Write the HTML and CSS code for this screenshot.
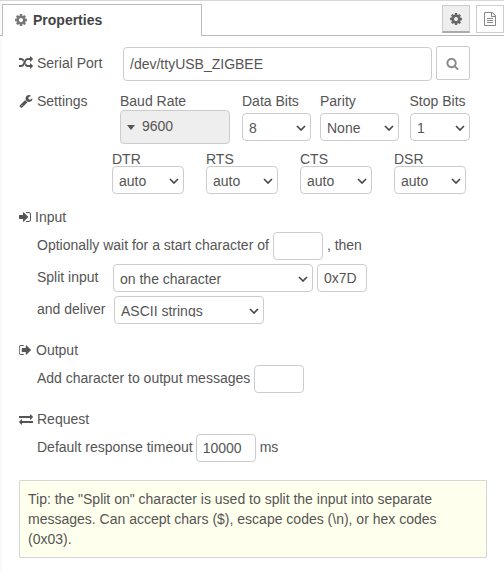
FILE: index.html
```html
<!DOCTYPE html>
<html lang="en">
<head>
<meta charset="utf-8">
<title>Properties</title>
<link rel="stylesheet" href="styles.css">
</head>
<body>
<svg class="sprite" aria-hidden="true">
<symbol id="cog" viewBox="0 0 1792 1792"><path d="M1152 896q0-106-75-181t-181-75-181 75-75 181 75 181 181 75 181-75 75-181zm512-109v222q0 12-8 23t-20 13l-185 28q-19 54-39 91 35 50 107 138 10 12 10 25t-9 23q-27 37-99 108t-94 71q-12 0-26-9l-138-108q-44 23-91 38-16 136-29 186-7 28-36 28h-222q-14 0-24.500-8.500t-11.500-21.500l-28-184q-49-16-90-37l-141 107q-10 9-25 9-14 0-25-11-126-114-165-168-7-10-7-23 0-12 8-23 15-21 51-66.500t54-70.500q-27-50-41-99l-183-27q-13-2-21-12.500t-8-23.500v-222q0-12 8-23t19-13l186-28q14-46 39-92-40-57-107-138-10-12-10-24 0-10 9-23 26-36 98.500-107.500t94.500-71.500q13 0 26 10l138 107q44-23 91-38 16-136 29-186 7-28 36-28h222q14 0 24.500 8.500t11.500 21.500l28 184q49 16 90 37l142-107q9-9 24-9 13 0 25 10 129 119 165 170 7 8 7 22 0 12-8 23-15 21-51 66.500t-54 70.500q26 50 41 98l183 28q13 2 21 12.500t8 23.500z"/></symbol>
<symbol id="random" viewBox="0 0 1792 1792"><path d="M666 481q-60 92-137 273-22-45-37-72.500t-40.500-63.500-51-56.500-63-35-81.500-14.500h-224q-14 0-23-9t-9-23v-192q0-14 9-23t23-9h224q250 0 410 225zm1126 799q0 14-9 23l-320 320q-9 9-23 9-13 0-22.500-9.500t-9.500-22.500v-192q-32 0-85 .5t-81 1-73-1-71-5-64-10.500-63-18.500-58-28.500-59-40-55-53.500-56-69.500q59-93 136-273 22 45 37 72.500t40.500 63.500 51 56.500 63 35 81.500 14.500h256v-192q0-14 9-23t23-9q12 0 24 10l319 319q9 9 9 23zm0-896q0 14-9 23l-320 320q-9 9-23 9-13 0-22.500-9.500t-9.500-22.500v-192h-256q-48 0-87 15t-69 45-51 61.500-45 77.500q-32 62-78 171-29 66-49.500 111t-54 105-64 100-74 83-90 68.500-106.500 42-128 16.500h-224q-14 0-23-9t-9-23v-192q0-14 9-23t23-9h224q48 0 87-15t69-45 51-61.500 45-77.500q32-62 78-171 29-66 49.500-111t54-105 64-100 74-83 90-68.500 106.500-42 128-16.500h256v-192q0-14 9-23t23-9q12 0 24 10l319 319q9 9 9 23z"/></symbol>
<symbol id="wrench" viewBox="0 0 1792 1792"><path d="M448 1472q0-26-19-45t-45-19-45 19-19 45 19 45 45 19 45-19 19-45zm644-420l-682 682q-37 37-90 37-52 0-91-37l-106-108q-38-36-38-90 0-53 38-91l681-681q39 98 114.500 173.500t173.500 114.500zm634-435q0 39-23 106-47 134-164.500 217.500t-258.500 83.500q-185 0-316.500-131.500t-131.500-316.500 131.500-316.500 316.500-131.500q58 0 121.500 16.500t107.500 46.500q16 11 16 28t-16 28l-293 169v224l193 107q5-3 79-48.500t135.500-81 70.500-35.500q15 0 23.500 10t8.500 25z"/></symbol>
<symbol id="sign-in" viewBox="128 0 1792 1792"><path d="M1312 896q0 26-19 45l-544 544q-19 19-45 19t-45-19-19-45v-288h-448q-26 0-45-19t-19-45v-384q0-26 19-45t45-19h448v-288q0-26 19-45t45-19 45 19l544 544q19 19 19 45zm352-352v704q0 119-84.500 203.500t-203.500 84.500h-320q-13 0-22.500-9.500t-9.500-22.500q0-4-1-20t-.5-26.500 3-23.500 10-19.500 20.500-6.500h320q66 0 113-47t47-113v-704q0-66-47-113t-113-47h-312l-11.500-1-11.500-3-8-5.500-7-9-2-13.500q0-4-1-20t-.5-26.500 3-23.500 10-19.500 20.500-6.500h320q119 0 203.500 84.500t84.500 203.500z"/></symbol>
<symbol id="sign-out" viewBox="96 0 1792 1792"><path d="M704 1440q0 4 1 20t.5 26.500-3 23.500-10 19.500-20.500 6.500h-320q-119 0-203.500-84.500t-84.500-203.500v-704q0-119 84.500-203.500t203.500-84.500h320q13 0 22.500 9.500t9.500 22.500q0 4 1 20t.5 26.500-3 23.500-10 19.500-20.500 6.500h-320q-66 0-113 47t-47 113v704q0 66 47 113t113 47h312l11.500 1 11.500 3 8 5.500 7 9 2 13.500zm928-544q0 26-19 45l-544 544q-19 19-45 19t-45-19-19-45v-288h-448q-26 0-45-19t-19-45v-384q0-26 19-45t45-19h448v-288q0-26 19-45t45-19 45 19l544 544q19 19 19 45z"/></symbol>
<symbol id="exchange" viewBox="0 0 1792 1792"><path d="M1792 1184v192q0 13-9.500 22.500t-22.500 9.500h-1376v192q0 13-9.500 22.500t-22.500 9.500q-12 0-24-10l-319-320q-9-9-9-22 0-14 9-23l320-320q9-9 23-9 13 0 22.500 9.500t9.500 22.500v192h1376q13 0 22.500 9.500t9.500 22.500zm0-544q0 14-9 23l-320 320q-9 9-23 9-13 0-22.500-9.500t-9.500-22.500v-192h-1376q-13 0-22.500-9.500t-9.500-22.500v-192q0-13 9.500-22.500t22.500-9.500h1376v-192q0-14 9-23t23-9q12 0 24 10l319 319q9 9 9 23z"/></symbol>
<symbol id="search" viewBox="0 0 1792 1792"><path d="M1216 832q0-185-131.500-316.500t-316.500-131.500-316.500 131.500-131.500 316.500 131.500 316.500 316.500 131.500 316.500-131.500 131.500-316.500zm512 832q0 52-38 90t-90 38q-54 0-90-38l-343-342q-179 124-399 124-143 0-273.500-55.500t-225-150-150-225-55.500-273.500 55.500-273.500 150-225 225-150 273.500-55.500 273.500 55.500 225 150 150 225 55.500 273.500q0 220-124 399l343 343q37 37 37 90z"/></symbol>
<symbol id="file" viewBox="0 0 1792 1792"><path d="M1596 380q28 28 48 76t20 88v1152q0 40-28 68t-68 28h-1344q-40 0-68-28t-28-68v-1600q0-40 28-68t68-28h896q40 0 88 20t76 48zm-444-244v376h376q-10-29-22-41l-313-313q-12-12-41-22zm384 1528v-1024h-416q-40 0-68-28t-28-68v-416h-768v1536h1280zm-1024-864q0-14 9-23t23-9h704q14 0 23 9t9 23v64q0 14-9 23t-23 9h-704q-14 0-23-9t-9-23v-64zm736 224q14 0 23 9t9 23v64q0 14-9 23t-23 9h-704q-14 0-23-9t-9-23v-64q0-14 9-23t23-9h704zm0 256q14 0 23 9t9 23v64q0 14-9 23t-23 9h-704q-14 0-23-9t-9-23v-64q0-14 9-23t23-9h704z"/></symbol>
<symbol id="chevron" viewBox="0 0 10 6"><path d="M1 1l4 4 4-4" fill="none" stroke="#444" stroke-width="1.600"/></symbol>
</svg>
<main class="editor">
  <header class="tabs">
    <div class="tab"><svg class="icon tab-icon"><use href="#cog"/></svg>Properties</div>
    <div class="tab-actions">
      <button class="tab-button active" aria-label="Properties"><svg class="icon"><use href="#cog"/></svg></button>
      <button class="tab-button" aria-label="Description"><svg class="icon"><use href="#file"/></svg></button>
    </div>
  </header>
  <form class="form">
    <div class="port-row">
      <label class="heading" for="port"><svg class="icon"><use href="#random"/></svg>Serial Port</label>
      <input id="port" class="port" value="/dev/ttyUSB_ZIGBEE">
      <button type="button" class="search" aria-label="Search"><svg class="icon"><use href="#search"/></svg></button>
    </div>
    <div class="settings">
      <div class="heading"><svg class="icon"><use href="#wrench"/></svg>Settings</div>
      <div class="field baud"><span>Baud Rate</span><div class="baud-box"><i class="caret"></i>9600</div></div>
      <label class="field data"><span>Data Bits</span><div class="select"><select><option>8</option></select><svg class="chevron"><use href="#chevron"/></svg></div></label>
      <label class="field parity"><span>Parity</span><div class="select"><select><option>None</option></select><svg class="chevron"><use href="#chevron"/></svg></div></label>
      <label class="field stop"><span>Stop Bits</span><div class="select"><select><option>1</option></select><svg class="chevron"><use href="#chevron"/></svg></div></label>
    </div>
    <div class="signals">
      <label class="signal">DTR<div class="select"><select><option>auto</option></select><svg class="chevron"><use href="#chevron"/></svg></div></label>
      <label class="signal">RTS<div class="select"><select><option>auto</option></select><svg class="chevron"><use href="#chevron"/></svg></div></label>
      <label class="signal">CTS<div class="select"><select><option>auto</option></select><svg class="chevron"><use href="#chevron"/></svg></div></label>
      <label class="signal">DSR<div class="select"><select><option>auto</option></select><svg class="chevron"><use href="#chevron"/></svg></div></label>
    </div>
    <section class="section">
      <div class="heading tight"><svg class="icon"><use href="#sign-in"/></svg>Input</div>
      <div class="row"><span>Optionally wait for a start character of</span><input class="short"><span>, then</span></div>
      <div class="row"><span class="split-label">Split input</span><div class="select split"><select><option>on the character</option></select><svg class="chevron"><use href="#chevron"/></svg></div><input class="short" value="0x7D"></div>
      <div class="row"><span class="deliver-label">and deliver</span><div class="select deliver"><select><option>ASCII strings</option></select><svg class="chevron"><use href="#chevron"/></svg></div></div>
    </section>
    <section class="section output">
      <div class="heading tight"><svg class="icon"><use href="#sign-out"/></svg>Output</div>
      <div class="row"><span>Add character to output messages</span><input class="short"></div>
    </section>
    <section class="section request">
      <div class="heading"><svg class="icon"><use href="#exchange"/></svg>Request</div>
      <div class="row"><span class="timeout-label">Default response timeout</span><input class="timeout" value="10000"><span>ms</span></div>
    </section>
    <div class="tip">Tip: the "Split on" character is used to split the input into separate messages. Can accept chars ($), escape codes (\n), or hex codes (0x03).</div>
  </form>
</main>
</body>
</html>
```
FILE: styles.css
```css
* { box-sizing: border-box; }
body {
  margin: 0;
  background: #fff;
  color: #555;
  font: 14px/20px "Liberation Sans", Arial, sans-serif;
}
.sprite { display: none; }
.icon { width: 14px; height: 14px; fill: currentColor; flex: none; }
.editor {
  width: 504px;
  height: 571px;
  overflow: hidden;
  border-top: 1px solid #d8d8d8;
  background: linear-gradient(to right, #f7f7f7, #fff 3px);
}
.tabs {
  display: flex;
  justify-content: space-between;
  height: 35px;
  padding: 3px 0 0 2px;
  box-shadow: inset 0 -1px #bbb;
}
.tab {
  display: flex;
  align-items: center;
  width: 200px;
  height: 32px;
  padding: 0 0 2px 11px;
  border: 1px solid #bbb;
  border-bottom: 0;
  background: #fff;
  color: #444;
  font-weight: bold;
}
.tab-icon { margin-right: 5px; color: #777; }
.tab-actions { display: flex; gap: 6px; padding-top: 1px; }
.tab-button {
  display: flex;
  align-items: center;
  justify-content: center;
  width: 28px;
  height: 28px;
  padding: 0;
  border: 1px solid #ccc;
  background: #fff;
  color: #888;
}
.tab-button.active { border-bottom: 2px solid #aaa; background: #eee; color: #666; }
.form { padding: 11px 17px 0 19px; }
.port-row { display: flex; height: 34px; }
.heading { display: flex; align-items: center; gap: 4px; height: 20px; }
.tight { gap: 2px; }
input, select {
  height: 28px;
  margin: 0;
  padding: 4px 6px;
  border: 1px solid #ccc;
  border-radius: 4px;
  background: #fff;
  color: #555;
  font: 14px/20px "Liberation Sans", Arial, sans-serif;
}
.select { display: grid; height: 28px; }
select {
  grid-area: 1 / 1;
  width: 100%;
  padding: 6px;
  line-height: 16px;
  appearance: none;
}
.chevron {
  grid-area: 1 / 1;
  place-self: center end;
  width: 10px;
  height: 6px;
  margin: 1px 5px 0 0;
  pointer-events: none;
}
.port-row .heading { width: 104px; margin-top: 6px; }
.port { width: 309px; height: 34px; }
.search {
  display: flex;
  align-items: center;
  justify-content: center;
  width: 34px;
  height: 34px;
  margin: -1px 0 0 4px;
  padding: 0 1px 0 0;
  border: 1px solid #ccc;
  border-radius: 2px;
  background: #fff;
  color: #888;
}
.search .icon { width: 13px; height: 13px; }
.settings { display: flex; height: 53px; margin-top: 10px; }
.settings .heading { width: 101px; }
.field { display: flex; flex-direction: column; }
.field span { height: 22px; white-space: nowrap; }
.baud { width: 110px; margin-right: 12px; }
.baud span { height: 19px; }
.baud-box {
  display: flex;
  align-items: center;
  height: 34px;
  padding: 0 0 2px 6px;
  border: 1px solid #ccc;
  border-radius: 4px;
  background: #eee;
}
.caret { width: 0; margin: 2px 7px 0 0; border: 4px solid transparent; border-top: 5px solid #555; border-bottom: 0; }
.data { width: 69px; margin-right: 9px; }
.parity { width: 79px; margin-right: 11px; }
.stop { width: 60px; }
.stop span { margin-left: -.5px; }
.signals { display: flex; gap: 22px; margin: 8px 0 0 93px; }
.signal { display: flex; flex-direction: column; width: 72px; line-height: 14px; }
.section { margin-top: 13px; }
.section .heading { margin-bottom: 5px; }
.row { display: flex; gap: 4px; height: 28px; margin: 0 0 4px 18px; line-height: 26px; }
.short { width: 50px; }
.split-label { width: 72px; }
.deliver-label { width: 73px; }
.split { width: 200px; }
.deliver { width: 150px; }
.output, .request { margin-top: 16px; }
.output .heading { gap: 3px; }
.timeout-label { margin-right: -1px; }
.timeout { width: 60px; }
.tip {
  margin-top: 18px;
  padding: 8px;
  border: 1px solid #d6d6d6;
  border-radius: 1px;
  background: #ffffed;
}
```
